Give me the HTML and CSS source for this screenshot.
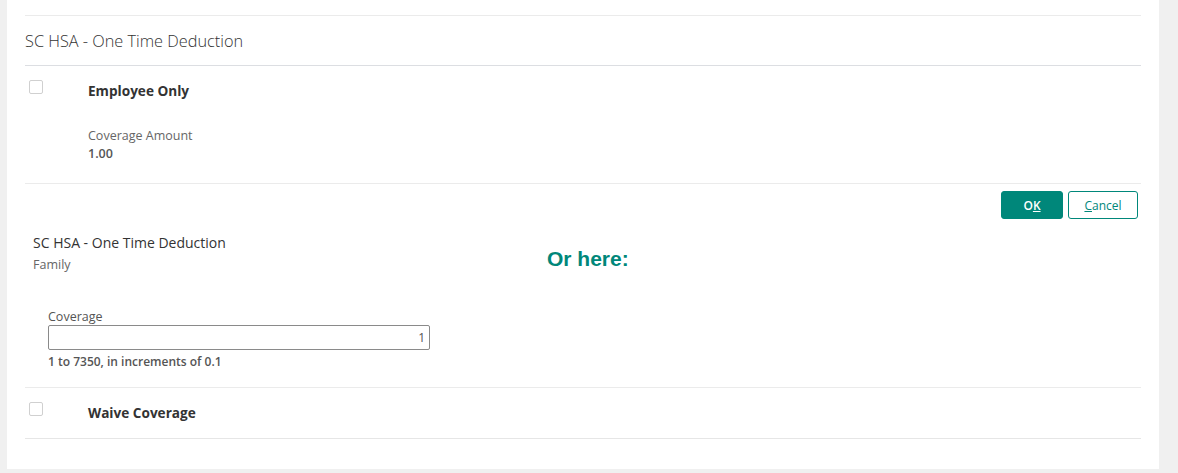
FILE: index.html
```html
<!DOCTYPE html>
<html lang="en">
<head>
  <meta charset="UTF-8">
  <title>Benefit Election</title>
  <link rel="stylesheet" href="styles.css">
</head>
<body>

  <div class="panel">
    <div class="top-rule"></div>

    <div class="plan-title">SC HSA - One Time Deduction</div>

    <!-- current option -->
    <div class="option">
      <div class="option-head">
        <span class="check"></span>
        <span class="option-name">Employee Only</span>
      </div>
      <div class="coverage">
        <div class="coverage-label">Coverage Amount</div>
        <div class="coverage-value">1.00</div>
      </div>
    </div>

    <div class="actions">
      <button class="btn btn-ok"><span>O<u>K</u></span></button>
      <button class="btn btn-cancel"><u>C</u>ancel</button>
    </div>

    <!-- edit option -->
    <div class="edit">
      <div class="edit-head">
        <div class="edit-title">
          <div class="edit-plan">SC HSA - One Time Deduction</div>
          <div class="edit-tier">Family</div>
        </div>
        <div class="note">Or here:</div>
      </div>

      <div class="field">
        <label class="field-label">Coverage</label>
        <input class="field-input" type="text" value="1">
        <div class="field-hint">1 to 7350, in increments of 0.1</div>
      </div>
    </div>

    <div class="option waive">
      <div class="option-head">
        <span class="check"></span>
        <span class="option-name">Waive Coverage</span>
      </div>
    </div>
  </div>

</body>
</html>
```

FILE: styles.css
```css
body {
  margin: 0;
  background-color: #f0f0f0;
  font-family: 'Open Sans', 'Noto Sans', sans-serif;
  color: #333;
}

.panel {
  margin-left: 7px;
  width: 1116px;
  height: 469px;
  padding: 0 18px;
  background-color: #fff;
}

.top-rule {
  height: 15px;
  border-bottom: 1px solid #ebebeb;
}

.plan-title {
  height: 49px;
  line-height: 50px;
  font-size: 16.3px;
  font-weight: 300;
  color: #333;
  border-bottom: 1px solid #dcdee2;
}

.option {
  padding-left: 4px;
  padding-bottom: 21px;
  border-bottom: 1px solid #ebebeb;
}

.option-head {
  display: flex;
  align-items: flex-start;
  padding-top: 14px;
}

.check {
  width: 12px;
  height: 12px;
  border: 1px solid #d0d0d0;
  border-radius: 2px;
  margin-right: 45px;
}

.option-name {
  margin-top: 1px;
  font-size: 13.6px;
  font-weight: bold;
  line-height: 19px;
  color: #333;
}

.coverage {
  margin-top: 27px;
  padding-left: 59px;
  font-size: 12.5px;
  line-height: 17px;
}

.coverage-label {
  color: #666;
}

.coverage-value {
  margin-top: 1px;
  color: #555;
  font-weight: 600;
}

.actions {
  display: flex;
  justify-content: flex-end;
  gap: 5px;
  padding: 7px 3px 0 0;
}

.btn {
  height: 28px;
  border-radius: 3px;
  font-family: inherit;
  font-size: 12px;
  font-weight: 600;
  cursor: pointer;
}

.btn-ok {
  width: 62px;
  background-color: #00877a;
  border: 1px solid #00877a;
  color: #fff;
}

.btn-cancel {
  width: 70px;
  background-color: #fff;
  border: 1px solid #00877a;
  color: #00877a;
  font-weight: normal;
}

.edit {
  padding: 15px 0 17px 8px;
  border-bottom: 1px solid #ebebeb;
}

.edit-head {
  display: flex;
}

.edit-title {
  width: 514px;
}

.edit-plan {
  font-size: 14px;
  line-height: 18px;
  color: #333;
}

.edit-tier {
  margin-top: 4px;
  font-size: 12.5px;
  line-height: 17px;
  color: #666;
}

.note {
  margin-top: 13px;
  font-family: 'Liberation Sans', Arial, sans-serif;
  font-size: 21px;
  font-weight: bold;
  line-height: 24px;
  color: #00877a;
}

.field {
  margin-top: 35px;
  padding-left: 15px;
  font-size: 12px;
  line-height: 17px;
}

.field-label {
  display: block;
  font-size: 12.5px;
  color: #555;
}

.field-input {
  display: block;
  box-sizing: border-box;
  width: 382px;
  height: 25px;
  margin: 0;
  padding: 0 4px;
  border: 1px solid #8a8a8a;
  border-radius: 2px;
  text-align: right;
  font-family: inherit;
  font-size: 12px;
  color: #555;
}

.field-hint {
  margin-top: 3px;
  color: #555;
  font-weight: 600;
}

.waive {
  height: 50px;
  padding-bottom: 0;
  border-bottom: 1px solid #e6e6e6;
}
```
